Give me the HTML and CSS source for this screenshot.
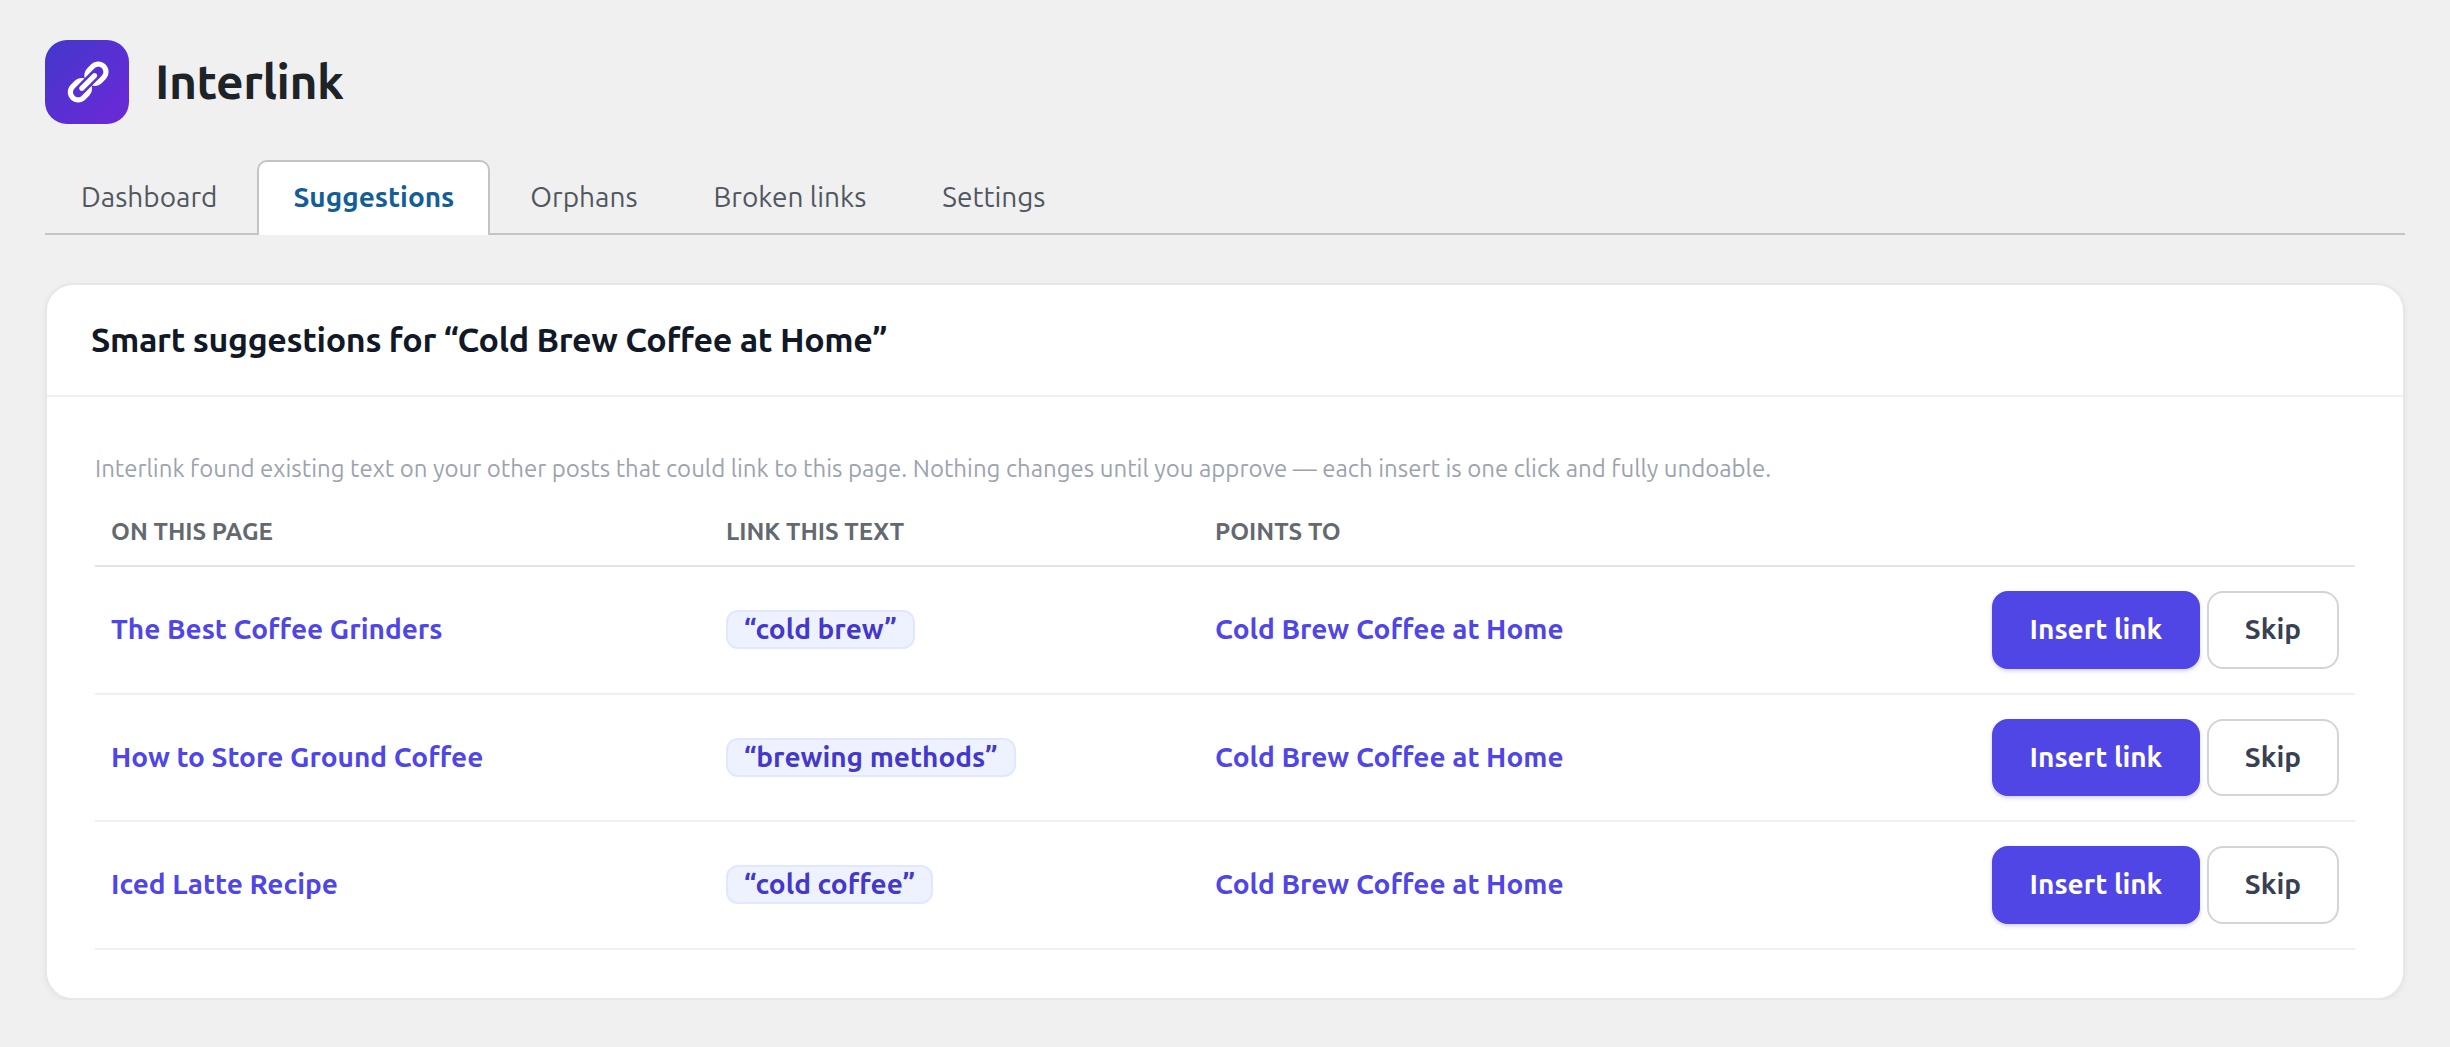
FILE: index.html
```html
<!DOCTYPE html>
<html lang="en">
<head>
<meta charset="utf-8">
<title>Interlink</title>
<link rel="stylesheet" href="styles.css">
</head>
<body>
<header class="brand">
  <span class="logo">
    <svg viewBox="0 0 20 20" width="48" height="48" fill="#fff" aria-hidden="true"><path d="M17.74 2.76c1.68 1.69 1.68 4.41 0 6.1l-1.53 1.52c-1.12 1.12-2.7 1.47-4.14 1.09l2.62-2.61.76-.77.76-.76c.84-.84.84-2.2 0-3.04-.84-.85-2.2-.85-3.04 0l-.77.76-3.38 3.38c-.37-1.44-.02-3.02 1.1-4.14l1.52-1.53c1.69-1.68 4.42-1.68 6.1 0zM8.59 13.43l5.34-5.34c.42-.42.42-1.1 0-1.52-.44-.43-1.13-.39-1.53 0l-5.33 5.34c-.42.42-.42 1.1 0 1.52.44.43 1.13.39 1.52 0zm-.76 2.29l4.14-4.15c.38 1.44.03 3.02-1.09 4.14l-1.52 1.53c-1.69 1.68-4.41 1.68-6.1 0-1.68-1.68-1.68-4.42 0-6.1l1.53-1.52c1.12-1.12 2.7-1.47 4.14-1.1l-4.14 4.15c-.85.84-.85 2.2 0 3.05.84.84 2.2.84 3.04 0z"/></svg>
  </span>
  <h1>Interlink</h1>
</header>
<nav class="tabs">
  <a class="tab">Dashboard</a>
  <a class="tab active">Suggestions</a>
  <a class="tab">Orphans</a>
  <a class="tab">Broken links</a>
  <a class="tab">Settings</a>
</nav>
<section class="card">
  <h2>Smart suggestions for “Cold Brew Coffee at Home”</h2>
  <div class="body">
    <p class="intro">Interlink found existing text on your other posts that could link to this page. Nothing changes until you approve — each insert is one click and fully undoable.</p>
    <div class="row head"><span>On this page</span><span>Link this text</span><span>Points to</span><span></span></div>
    <div class="row">
      <a class="link">The Best Coffee Grinders</a>
      <span><span class="badge">“cold brew”</span></span>
      <a class="link">Cold Brew Coffee at Home</a>
      <span class="actions"><button class="btn primary">Insert link</button><button class="btn">Skip</button></span>
    </div>
    <div class="row">
      <a class="link">How to Store Ground Coffee</a>
      <span><span class="badge">“brewing methods”</span></span>
      <a class="link">Cold Brew Coffee at Home</a>
      <span class="actions"><button class="btn primary">Insert link</button><button class="btn">Skip</button></span>
    </div>
    <div class="row">
      <a class="link">Iced Latte Recipe</a>
      <span><span class="badge">“cold coffee”</span></span>
      <a class="link">Cold Brew Coffee at Home</a>
      <span class="actions"><button class="btn primary">Insert link</button><button class="btn">Skip</button></span>
    </div>
  </div>
</section>
</body>
</html>
```
FILE: styles.css
```css
* { box-sizing: border-box; }
body {
  margin: 0;
  padding: 40px 45px 0;
  background: #f0f0f1;
  color: #1d2327;
  font: 400 28px/36px Ubuntu, "Noto Sans", sans-serif;
}
h1, h2, p { margin: 0; }
.brand { display: flex; align-items: center; gap: 26px; height: 84px; }
.logo {
  display: flex; align-items: center; justify-content: center;
  width: 84px; height: 84px; border-radius: 22px;
  background: linear-gradient(135deg, #4338ca, #6d28d9);
}
h1 { padding-bottom: 2px; font-size: 48px; line-height: 60px; font-weight: 600; letter-spacing: -0.01em; }
.tabs {
  display: flex; gap: 4px; height: 75px; margin-top: 36px;
  border-bottom: 2px solid #c3c4c7;
}
.tab {
  height: 75px; padding: 17px 34px 0;
  border: 2px solid transparent; border-bottom: 0;
  border-radius: 10px 10px 0 0; color: #50575e;
}
.tab.active { background: #fff; border-color: #c3c4c7; color: #135e96; font-weight: 600; }
.card {
  margin-top: 48px; height: 717px;
  border: 2px solid #e5e7eb; border-radius: 28px;
  background: #fff; box-shadow: 0 2px 6px rgba(0, 0, 0, 0.05);
}
h2 {
  height: 112px; padding: 33px 44px 0;
  border-bottom: 2px solid #f0f0f1;
  color: #111827; font-size: 34px; line-height: 42px; font-weight: 600; letter-spacing: -0.01em;
}
.body { padding: 54px 48px 0; }
.intro { height: 36px; color: #9ca3af; font-size: 24px; white-space: nowrap; }
.row {
  display: grid; grid-template-columns: 615px 489px 1fr auto; align-items: center;
  height: 127.5px; border-bottom: 2px solid #f0f0f1;
}
.row > * { padding: 0 16px; }
.row > .link { padding-bottom: 1px; }
.head {
  height: 80px; padding-top: 27px; border-color: #e2e4e7; align-items: start;
  color: #646970; font-size: 24px; font-weight: 600; text-transform: uppercase;
}
.link { color: #4f46e5; font-weight: 600; }
.badge {
  display: block; width: fit-content; padding: 0 16px 2px; line-height: 33px;
  border: 2px solid #e0e7ff; border-radius: 12px;
  background: #eef2ff; color: #4338ca; font-weight: 600;
}
.actions { display: flex; gap: 6.5px; }
.btn {
  height: 77.5px; padding: 0 36px 1px; border: 2px solid #d1d5db; border-radius: 16px;
  background: #fff; color: #374151; font: inherit; font-weight: 600;
}
.primary {
  border-color: #4f46e5; background: #4f46e5; color: #fff;
  box-shadow: 0 2px 4px rgba(79, 70, 229, 0.25);
}
```
